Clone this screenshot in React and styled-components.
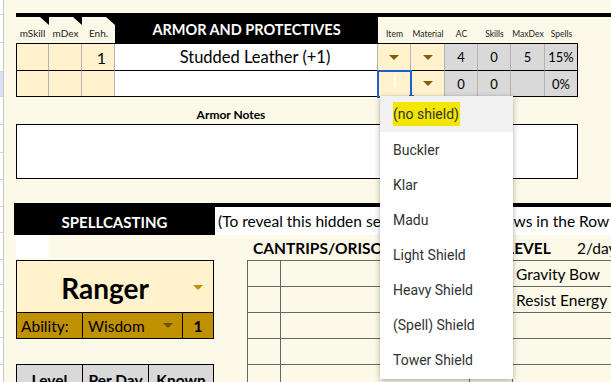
import React from 'react';
import styled, { createGlobalStyle } from 'styled-components';

const Global = createGlobalStyle`
  html, body { margin: 0; padding: 0; background: #fdf9e8; }
  body { font-family: Lato, "Open Sans", sans-serif; color: #000; }
  * { box-sizing: border-box; }
`;

const PAGE = '#fdf9e8';
const CREAM = '#fff2cc';
const GRAY = '#d9d9d9';
const GOLD = '#bf9000';

const Screen = styled.div`
  display: flex;
  width: 611px;
  height: 382px;
  overflow: hidden;
  background: ${PAGE};
`;

const Gutter = styled.div`
  width: 4px;
  flex-shrink: 0;
  border-right: 1px solid #c6c6c6;
  display: flex;
  flex-direction: column;
`;

const GutterRow = styled.div`
  flex-shrink: 0;
  height: ${p => p.$h}px;
  border-bottom: 1px solid #d4d4d4;
  background: ${p => (p.$sel ? '#d6e4f5' : '#fff')};
`;

const Sheet = styled.div`
  position: relative;
  flex: 1;
  padding: 13px 0 0 12px;
  display: block;
`;

const Strip = styled.div`
  height: 4px;
  background: #000;
  margin-left: ${p => p.$ml || 0}px;
`;

const ArmorArea = styled.div`
  display: flex;
`;

const ArmorBlock = styled.div`
  width: 562px;
  flex-shrink: 0;
`;

const RightRule = styled.div`
  margin-left: auto;
  margin-top: 26px;
  width: 1px;
  height: 136px;
  background: #000;
`;

const cols = '33px 33px 33px 263px 33px 34px 33px 33px 34px 33px';

const HeadGrid = styled.div`
  display: grid;
  grid-template-columns: ${cols};
  height: 26px;
`;

const NotchHead = styled.div`
  position: relative;
  background: ${PAGE};
  font-size: 10px;
  color: #1a1a1a;
  display: flex;
  align-items: flex-end;
  justify-content: center;
  padding-bottom: 4px;
  &::after {
    content: '';
    position: absolute;
    top: 0;
    right: 0;
    border-top: 8px solid #000;
    border-left: 9px solid transparent;
  }
`;

const TitleHead = styled.div`
  background: #000;
  color: #fff;
  font-weight: 700;
  font-size: 14.5px;
  display: flex;
  align-items: center;
  justify-content: center;
  padding-bottom: 2px;
  white-space: nowrap;
`;

const SmallHead = styled.div`
  font-size: 8.5px;
  color: #1a1a1a;
  display: flex;
  align-items: flex-end;
  justify-content: center;
  padding-bottom: 4px;
  white-space: nowrap;
`;

const DataGrid = styled.div`
  display: grid;
  grid-template-columns: 32px 33px 33px 263px 33px 34px 33px 33px 34px 32px;
  grid-template-rows: 27px 25px;
  border: 1px solid #000;
`;

const Cell = styled.div`
  position: relative;
  background: ${p => p.$bg || '#fff'};
  border-right: ${p => (p.$last ? 'none' : '1px solid #b3b3b3')};
  border-bottom: ${p => (p.$first ? '1px solid #000' : 'none')};
  display: flex;
  align-items: center;
  justify-content: ${p => p.$align || 'center'};
  padding-right: ${p => (p.$align === 'flex-end' ? 8 : 0)}px;
  padding-left: ${p => p.$pl || 0}px;
  font-size: ${p => p.$fs || 13}px;
  white-space: nowrap;
`;

const Selected = styled.div`
  position: absolute;
  left: -1px;
  top: -1px;
  right: -2px;
  bottom: -2px;
  border: 2px solid #1d5fcf;
  z-index: 2;
  &::before {
    content: '';
    position: absolute;
    left: 15px;
    top: 2px;
    width: 2px;
    height: 13px;
    background: #fff;
  }
  &::after {
    content: '';
    position: absolute;
    right: -4px;
    bottom: -4px;
    width: 5px;
    height: 5px;
    background: #1d5fcf;
  }
`;

const Arrow = styled.span`
  width: 0;
  height: 0;
  border-left: 5px solid transparent;
  border-right: 5px solid transparent;
  border-top: 5px solid ${p => p.$c || '#7f6000'};
`;

const NotesLabel = styled.div`
  width: 430px;
  text-align: center;
  font-weight: 700;
  font-size: 12px;
  margin-top: 10px;
  height: 17px;
  line-height: 15px;
`;

const NotesBox = styled.div`
  height: 55px;
  border: 1px solid #000;
  background: #fff;
`;

const SpellSection = styled.div`
  margin-top: 24px;
`;

const SpellHead = styled.div`
  display: flex;
  height: 28px;
`;

const SpellTitle = styled.div`
  width: 201px;
  margin-left: -2px;
  background: #000;
  color: #fff;
  font-weight: 700;
  font-size: 15px;
  display: flex;
  align-items: center;
  justify-content: center;
  padding-top: 2px;
`;

const Reveal = styled.div`
  flex: 1;
  background: #fff;
  font-size: 15.5px;
  padding-left: 3px;
  line-height: 28px;
  white-space: nowrap;
  overflow: hidden;
`;

const Body = styled.div`
  display: flex;
`;

const LeftCol = styled.div`
  width: 198px;
  flex-shrink: 0;
`;

const WhiteSquare = styled.div`
  width: 33px;
  height: 23px;
  background: #fff;
`;

const RangerBox = styled.div`
  margin-top: 2px;
  border: 1px solid #000;
`;

const RangerTop = styled.div`
  height: 51px;
  background: ${CREAM};
  display: flex;
  align-items: center;
  padding: 2px 10px 0 0;
`;

const RangerName = styled.div`
  flex: 1;
  text-align: center;
  font-weight: 700;
  font-size: 28px;
`;

const AbilityRow = styled.div`
  height: 26px;
  border-top: 1px solid #000;
  background: ${GOLD};
  display: grid;
  grid-template-columns: 66px 100px 1fr;
  font-size: 15.5px;
`;

const AbCell = styled.div`
  display: flex;
  align-items: center;
  justify-content: ${p => p.$j || 'flex-start'};
  padding-left: ${p => p.$pl || 0}px;
  padding-right: ${p => p.$pr || 0}px;
  border-right: ${p => (p.$last ? 'none' : '1px solid #000')};
  font-weight: ${p => (p.$bold ? 700 : 400)};
`;

const LevelTable = styled.div`
  margin-top: 25px;
  height: 30px;
  border: 1px solid #000;
  border-bottom: none;
  background: ${GRAY};
  display: grid;
  grid-template-columns: 66px 66px 1fr;
`;

const LevelHead = styled.div`
  border-right: ${p => (p.$last ? 'none' : '1px solid #000')};
  font-weight: 700;
  font-size: 15.5px;
  text-align: center;
  padding-top: 6px;
  white-space: nowrap;
`;

const RightCol = styled.div`
  margin-left: 33px;
  flex: 1;
`;

const ListHead = styled.div`
  height: 25px;
  display: flex;
  align-items: center;
  font-size: 15.5px;
  white-space: nowrap;
`;

const ListTitle = styled.span`
  font-weight: 700;
  padding-left: 6px;
  width: ${p => p.$w}px;
  flex-shrink: 0;
`;

const PerDay = styled.span`
  margin-left: 101px;
`;

const Tables = styled.div`
  display: flex;
`;

const SpellTable = styled.div`
  display: grid;
  grid-template-columns: ${p => p.$c}px 1fr;
  grid-auto-rows: 26px;
  border-top: 1px solid #666;
  border-left: ${p => (p.$noLeft ? 'none' : '1px solid #666')};
  width: ${p => (p.$w ? `${p.$w}px` : 'auto')};
  flex: ${p => (p.$w ? 'none' : 1)};
`;

const SpellCell = styled.div`
  border-bottom: 1px solid #666;
  border-right: ${p => (p.$wide ? 'none' : '1px solid #666')};
  font-size: 15.5px;
  padding-left: 3px;
  display: flex;
  align-items: center;
  white-space: nowrap;
  overflow: hidden;
`;

const Dropdown = styled.div`
  position: absolute;
  left: 376px;
  top: 96px;
  width: 133px;
  height: 283px;
  background: #fff;
  box-shadow: 0 2px 6px rgba(0, 0, 0, 0.28), 0 0 2px rgba(0, 0, 0, 0.12);
  z-index: 5;
  display: flex;
  flex-direction: column;
  font-family: Roboto, "Noto Sans", sans-serif;
`;

const Option = styled.div`
  height: ${p => (p.$active ? 36 : 35)}px;
  flex-shrink: 0;
  background: ${p => (p.$active ? '#f1f1f1' : '#fff')};
  padding-left: 13px;
  display: flex;
  align-items: center;
  font-size: 14px;
  color: #333;
  white-space: nowrap;
`;

const Mark = styled.span`
  background: #f3e600;
  padding: 4px 1px 4px 0;
`;

const gutterRows = [15, 28, 29, 25, 28, 28, 27, 27, 26, 27, 25, 27, 26, 27, 30];

const options = ['Buckler', 'Klar', 'Madu', 'Light Shield', 'Heavy Shield', '(Spell) Shield', 'Tower Shield'];

export default function App() {
  return (
    <>
      <Global />
      <Screen>
        <Gutter>
          {gutterRows.map((h, i) => (
            <GutterRow key={i} $h={h} $sel={i === 3} />
          ))}
        </Gutter>
        <Sheet>
          <Strip />
          <ArmorArea>
            <ArmorBlock>
              <HeadGrid>
                <NotchHead>mSkill</NotchHead>
                <NotchHead>mDex</NotchHead>
                <NotchHead>Enh.</NotchHead>
                <TitleHead>ARMOR AND PROTECTIVES</TitleHead>
                <SmallHead>Item</SmallHead>
                <SmallHead>Material</SmallHead>
                <SmallHead>AC</SmallHead>
                <SmallHead>Skills</SmallHead>
                <SmallHead>MaxDex</SmallHead>
                <SmallHead>Spells</SmallHead>
              </HeadGrid>
              <DataGrid>
                <Cell $bg={CREAM} $first />
                <Cell $bg={CREAM} $first />
                <Cell $bg={CREAM} $first $align="flex-end" $fs={16}>1</Cell>
                <Cell $first $fs={16.5} $pl={18}>Studded Leather (+1)</Cell>
                <Cell $bg={CREAM} $first><Arrow /></Cell>
                <Cell $bg={CREAM} $first><Arrow /></Cell>
                <Cell $bg={GRAY} $first>4</Cell>
                <Cell $bg={GRAY} $first>0</Cell>
                <Cell $bg={GRAY} $first>5</Cell>
                <Cell $bg={GRAY} $first $last>15%</Cell>

                <Cell $bg={CREAM} />
                <Cell $bg={CREAM} />
                <Cell $bg={CREAM} />
                <Cell />
                <Cell $bg={CREAM}><Selected /></Cell>
                <Cell $bg={CREAM}><Arrow /></Cell>
                <Cell $bg={GRAY}>0</Cell>
                <Cell $bg={GRAY}>0</Cell>
                <Cell $bg={GRAY} />
                <Cell $bg={GRAY} $last>0%</Cell>
              </DataGrid>
              <NotesLabel>Armor Notes</NotesLabel>
              <NotesBox />
            </ArmorBlock>
            <RightRule />
          </ArmorArea>

          <SpellSection>
            <Strip $ml={-2} />
            <SpellHead>
              <SpellTitle>SPELLCASTING</SpellTitle>
              <Reveal>(To reveal this hidden section, unhide the rows in the Row headers)</Reveal>
            </SpellHead>
            <Body>
              <LeftCol>
                <WhiteSquare />
                <RangerBox>
                  <RangerTop>
                    <RangerName>Ranger</RangerName>
                    <Arrow $c={GOLD} />
                  </RangerTop>
                  <AbilityRow>
                    <AbCell $pl={4}>Ability:</AbCell>
                    <AbCell $pl={5} $pr={9} $j="space-between">
                      Wisdom
                      <Arrow $c="#6b5000" />
                    </AbCell>
                    <AbCell $last $bold $j="center">1</AbCell>
                  </AbilityRow>
                </RangerBox>
                <LevelTable>
                  <LevelHead>Level</LevelHead>
                  <LevelHead>Per Day</LevelHead>
                  <LevelHead $last>Known</LevelHead>
                </LevelTable>
              </LeftCol>
              <RightCol>
                <ListHead>
                  <ListTitle $w={223}>CANTRIPS/ORISONS</ListTitle>
                  <ListTitle $w={0}>1ST LEVEL</ListTitle>
                  <PerDay>2/day</PerDay>
                </ListHead>
                <Tables>
                  <SpellTable $w={223} $c={33}>
                    {[0, 1, 2, 3, 4].map(i => (
                      <React.Fragment key={i}>
                        <SpellCell />
                        <SpellCell />
                      </React.Fragment>
                    ))}
                  </SpellTable>
                  <SpellTable $noLeft $c={43}>
                    {['Gravity Bow', 'Resist Energy', '', '', ''].map((s, i) => (
                      <React.Fragment key={i}>
                        <SpellCell />
                        <SpellCell $wide>{s}</SpellCell>
                      </React.Fragment>
                    ))}
                  </SpellTable>
                </Tables>
              </RightCol>
            </Body>
          </SpellSection>

          <Dropdown>
            <Option $active><Mark>(no shield)</Mark></Option>
            {options.map(o => (
              <Option key={o}>{o}</Option>
            ))}
          </Dropdown>
        </Sheet>
      </Screen>
    </>
  );
}
